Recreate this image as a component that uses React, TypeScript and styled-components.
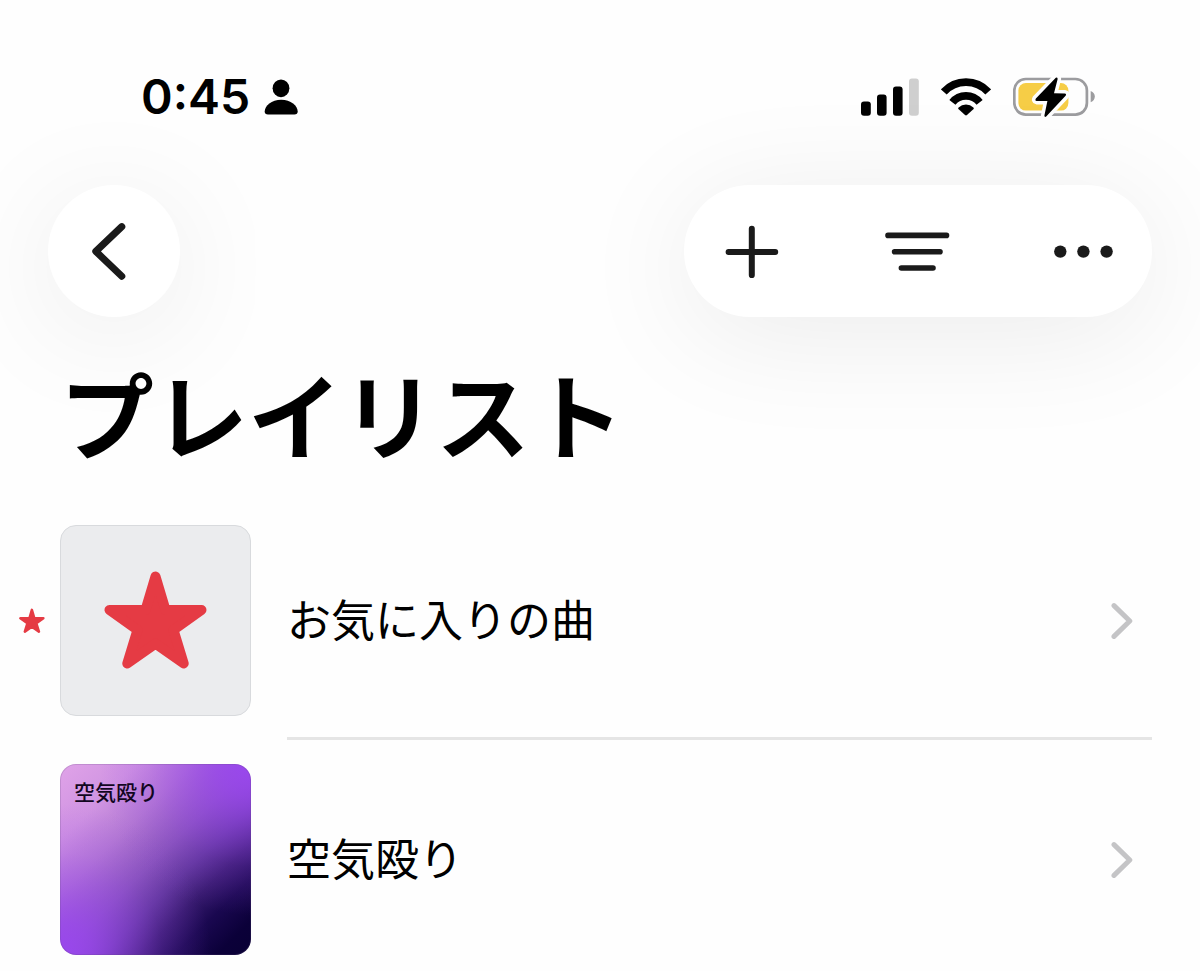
import React from "react";
import styled, { createGlobalStyle } from "styled-components";

const GlobalStyle = createGlobalStyle`
  *, *::before, *::after { box-sizing: border-box; }
  body {
    margin: 0;
    background: #fefefe;
    color: #000;
    font-family: Inter, "Noto Sans CJK JP", sans-serif;
  }
`;

const Screen = styled.main`
  width: 100%;
  overflow: hidden;
`;

const StatusBar = styled.div`
  display: flex;
  align-items: center;
  justify-content: space-between;
  height: 60px;
  margin-top: 67px;
  padding: 0 105px 0 141px;
`;

const StatusGroup = styled.div<{ $gap: number }>`
  display: flex;
  align-items: center;
  gap: ${(p) => p.$gap}px;
`;

const Clock = styled.time`
  font-size: 48px;
  line-height: 60px;
  font-weight: 600;
`;

const NavBar = styled.nav`
  display: flex;
  justify-content: space-between;
  margin-top: 58px;
  padding: 0 48px;
`;

const GlassGroup = styled.div`
  display: flex;
  gap: 30px;
  height: 132px;
  border-radius: 66px;
  background: #fff;
  box-shadow: 0 16px 120px rgba(0, 0, 0, 0.08);
`;

const IconButton = styled.button<{ $width: number }>`
  display: flex;
  align-items: center;
  justify-content: center;
  width: ${(p) => p.$width}px;
  height: 132px;
  padding: 0;
  border: 0;
  border-radius: 66px;
  background: transparent;
  color: #1a1a1a;
  cursor: pointer;
`;

const Title = styled.h1`
  position: relative;
  margin: 0;
  padding: 42px 60px 22px;
  font-size: 94px;
  line-height: 120px;
  font-weight: 700;
`;

const List = styled.ul`
  margin: 0;
  padding: 0 48px 0 0;
  list-style: none;
`;

const RowLink = styled.a`
  display: flex;
  color: inherit;
  text-decoration: none;
`;

const Marker = styled.span`
  display: flex;
  align-items: center;
  width: 60px;
  padding-left: 19px;
`;

const Artwork = styled.span`
  display: flex;
  flex: none;
  width: 191px;
  height: 191px;
  margin: 24px 36px 24px 0;
  border-radius: 16px;
`;

const StarArtwork = styled(Artwork)`
  align-items: center;
  justify-content: center;
  border: 1px solid #d8dadd;
  background: #ebecee;
`;

const GradientArtwork = styled(Artwork)`
  padding: 12px 13px;
  margin-bottom: 16px;
  border: 1px solid rgba(90, 70, 120, 0.2);
  background:
    radial-gradient(circle at 100% 0%, #9a47ee 0%, rgba(154, 71, 238, 0.8) 12%, rgba(154, 71, 238, 0.5) 24%, rgba(154, 71, 238, 0.2) 38%, rgba(154, 71, 238, 0) 56%),
    radial-gradient(circle at 0% 100%, #9a47ee 0%, rgba(154, 71, 238, 0.8) 12%, rgba(154, 71, 238, 0.5) 24%, rgba(154, 71, 238, 0.2) 38%, rgba(154, 71, 238, 0) 56%),
    linear-gradient(135deg, #e0a3e8 0%, #d094e2 20%, #b57bd3 34%, #8754b8 50%, #5e3698 61%, #35196c 71%, #1a0850 80%, #0b0039 91%, #090034 100%);
  background-origin: border-box;
`;

const ArtworkLabel = styled.span`
  font-size: 21px;
  line-height: 32px;
  font-weight: 500;
  color: #12061f;
`;

const RowBody = styled.span<{ $divider: boolean }>`
  display: flex;
  flex: 1;
  align-items: center;
  justify-content: space-between;
  padding: ${(p) => (p.$divider ? 3 : 11)}px 19px 0 0;
  border-bottom: 3px solid ${(p) => (p.$divider ? "#e5e5e5" : "transparent")};
`;

const RowTitle = styled.span`
  font-size: 44px;
  line-height: 64px;
`;

function PersonIcon() {
  return (
    <svg width="34" height="36" viewBox="0 0 34 36" aria-hidden="true">
      <ellipse cx="17" cy="9.3" rx="8.4" ry="8.9" />
      <path d="M4 35.5C1.8 35.5.7 34.4.7 32.6C.7 27 7.6 20.8 17.2 20.8S33.7 27 33.7 32.6C33.7 34.4 32.6 35.5 30.4 35.5Z" />
    </svg>
  );
}

function SignalIcon() {
  return (
    <svg width="58" height="38" viewBox="0 0 58 38" role="img" aria-label="電波">
      <rect x="0" y="23.4" width="9.8" height="14.4" rx="3" />
      <rect x="16" y="16.4" width="9.6" height="21.4" rx="3" />
      <rect x="32" y="8.6" width="9.6" height="29.2" rx="3" />
      <rect x="48" y="0.4" width="9.8" height="37.4" rx="3" fill="#cfcfcf" />
    </svg>
  );
}

function WifiIcon() {
  return (
    <svg width="50" height="38" viewBox="0 0 50 38" role="img" aria-label="Wi-Fi">
      <g fill="none" stroke="#000" strokeWidth="7.8">
        <path d="M2.8 14A30 30 0 0 1 47.2 14" />
        <path d="M11.4 24.4A17.4 17.4 0 0 1 38.6 24.4" />
      </g>
      <path d="M24 37.1L17.4 31Q16.8 30.2 17.6 29.4A10.6 10.6 0 0 1 32.4 29.4Q33.2 30.2 32.6 31L26 37.1Q25 38 24 37.1Z" />
    </svg>
  );
}

function BatteryIcon() {
  const bolt = "M42.8.8L22.9 21.4Q21.6 23.6 23.6 23.9L34.4 24L31.4 38.6Q31.4 40.6 33.2 39.6L52.6 18.8Q53.8 16.6 51.8 16.4L41 16.2L44.6 2.2Q44.8-.4 42.8.8Z";
  return (
    <svg width="82" height="42" viewBox="0 -1 82 42" role="img" aria-label="充電中">
      <rect x="1.3" y="2" width="72.6" height="35.6" rx="11.5" fill="none" stroke="#9c9c9f" strokeWidth="2.7" />
      <rect x="5.4" y="6" width="50" height="27.6" rx="7.5" fill="#f6cd46" />
      <path d="M77.7 14Q81.8 15.6 81.8 19.6T77.7 25.2Z" fill="#9c9c9f" />
      <path d={bolt} fill="#fefefe" stroke="#fefefe" strokeWidth="7" strokeLinejoin="round" />
      <path d={bolt} />
    </svg>
  );
}

function BackIcon() {
  return (
    <svg width="48" height="64" viewBox="0 0 48 64" fill="none" stroke="currentColor" strokeWidth="7" strokeLinecap="round" strokeLinejoin="round" aria-hidden="true">
      <path d="M31.8 7.6L5.8 32.4L31.8 57.2" />
    </svg>
  );
}

function PlusIcon() {
  return (
    <svg width="54" height="54" viewBox="0 0 54 54" fill="none" stroke="currentColor" strokeWidth="6" strokeLinecap="round" aria-hidden="true">
      <path d="M26.8 4.8V51.2M3.6 28H50.2" />
    </svg>
  );
}

function SortIcon() {
  return (
    <svg width="66" height="42" viewBox="0 0 66 42" fill="none" stroke="currentColor" strokeWidth="5.6" strokeLinecap="round" aria-hidden="true">
      <path d="M3 5.4H61.5M9.6 21.7H55M16.4 38H48" />
    </svg>
  );
}

function MoreIcon() {
  return (
    <svg width="60" height="14" viewBox="0 0 60 14" fill="currentColor" aria-hidden="true">
      <circle cx="6.3" cy="7.6" r="6.2" />
      <circle cx="29.4" cy="7.6" r="6.2" />
      <circle cx="52.6" cy="7.6" r="6.2" />
    </svg>
  );
}

function StarIcon({ width, height }: { width: number; height: number }) {
  return (
    <svg width={width} height={height} viewBox="-51.5 -50 104 100" fill="#e53b44" stroke="#e53b44" strokeWidth="10" strokeLinejoin="round" aria-hidden="true">
      <path d="M0-44.5L10-11H46L18 9L28.2 42.5L0 22.6L-28.2 42.5L-18 9L-46-11H-10Z" />
    </svg>
  );
}

function ChevronIcon() {
  return (
    <svg width="22" height="38" viewBox="0 0 22 38" fill="none" stroke="#c4c4c6" strokeWidth="5" strokeLinecap="round" strokeLinejoin="round" aria-hidden="true">
      <path d="M3 3.6L18.8 19L3 34.4" />
    </svg>
  );
}

export default function App() {
  return (
    <>
      <GlobalStyle />
      <Screen>
        <StatusBar>
          <StatusGroup $gap={14}>
            <Clock>0:45</Clock>
            <PersonIcon />
          </StatusGroup>
          <StatusGroup $gap={22}>
            <SignalIcon />
            <WifiIcon />
            <BatteryIcon />
          </StatusGroup>
        </StatusBar>

        <NavBar>
          <GlassGroup>
            <IconButton $width={132} type="button" aria-label="戻る">
              <BackIcon />
            </IconButton>
          </GlassGroup>
          <GlassGroup>
            <IconButton $width={136} type="button" aria-label="追加">
              <PlusIcon />
            </IconButton>
            <IconButton $width={136} type="button" aria-label="並べ替え">
              <SortIcon />
            </IconButton>
            <IconButton $width={136} type="button" aria-label="その他">
              <MoreIcon />
            </IconButton>
          </GlassGroup>
        </NavBar>

        <Title>プレイリスト</Title>

        <List>
          <li>
            <RowLink href="#favorites">
              <Marker>
                <StarIcon width={26} height={26} />
              </Marker>
              <StarArtwork>
                <StarIcon width={104} height={100} />
              </StarArtwork>
              <RowBody $divider>
                <RowTitle>お気に入りの曲</RowTitle>
                <ChevronIcon />
              </RowBody>
            </RowLink>
          </li>
          <li>
            <RowLink href="#karanaguri">
              <Marker />
              <GradientArtwork>
                <ArtworkLabel>空気殴り</ArtworkLabel>
              </GradientArtwork>
              <RowBody $divider={false}>
                <RowTitle>空気殴り</RowTitle>
                <ChevronIcon />
              </RowBody>
            </RowLink>
          </li>
        </List>
      </Screen>
    </>
  );
}
